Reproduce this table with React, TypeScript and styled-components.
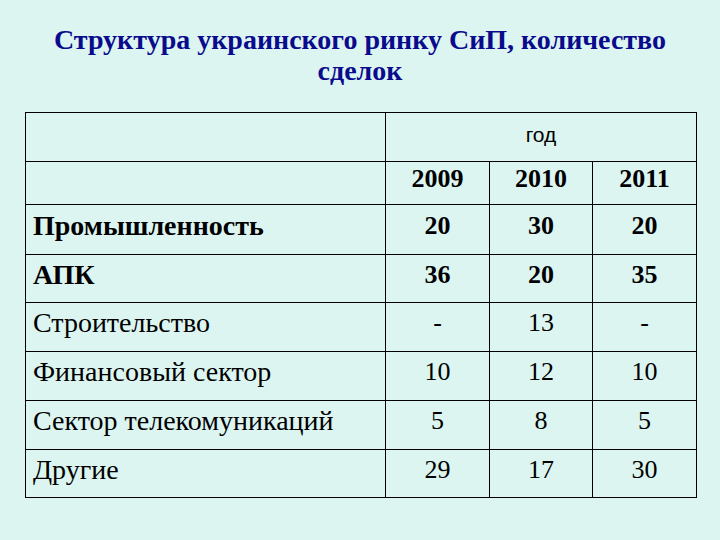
import styled, { createGlobalStyle } from "styled-components";

const GlobalStyle = createGlobalStyle`
  html, body {
    margin: 0;
    padding: 0;
    background: #dcf5f1;
  }
`;

const years = ["2009", "2010", "2011"];

const rows: { label: string; values: string[]; bold?: boolean; height: number }[] = [
  { label: "Промышленность", values: ["20", "30", "20"], bold: true, height: 50 },
  { label: "АПК", values: ["36", "20", "35"], bold: true, height: 48 },
  { label: "Строительство", values: ["-", "13", "-"], height: 49 },
  { label: "Финансовый сектор", values: ["10", "12", "10"], height: 49 },
  { label: "Сектор телекомуникаций", values: ["5", "8", "5"], height: 49 },
  { label: "Другие", values: ["29", "17", "30"], height: 48 },
];

const App = () => {
  return (
    <>
      <GlobalStyle />
      <Slide>
        <Title>
          Структура украинского ринку СиП, количество
          <br />
          сделок
        </Title>
        <Table>
          <colgroup>
            <col style={{ width: 360 }} />
            <col style={{ width: 104 }} />
            <col style={{ width: 103 }} />
            <col style={{ width: 104 }} />
          </colgroup>
          <tbody>
            <Row $height={49}>
              <LabelCell />
              <YearGroupCell colSpan={3}>год</YearGroupCell>
            </Row>
            <Row $height={43}>
              <LabelCell />
              {years.map((y) => (
                <ValueCell key={y} $bold>
                  {y}
                </ValueCell>
              ))}
            </Row>
            {rows.map((r) => (
              <Row key={r.label} $height={r.height}>
                <LabelCell $bold={r.bold}>{r.label}</LabelCell>
                {r.values.map((v, i) => (
                  <ValueCell key={i} $bold={r.bold}>
                    {v}
                  </ValueCell>
                ))}
              </Row>
            ))}
          </tbody>
        </Table>
      </Slide>
    </>
  );
};

const Slide = styled.div`
  width: 720px;
  height: 540px;
  background: #dcf5f1;
  display: flex;
  flex-direction: column;
  align-items: flex-start;
  padding: 24px 0 0 25px;
  box-sizing: border-box;
`;

const Title = styled.h1`
  margin: 0 0 26px -25px;
  width: 720px;
  text-align: center;
  font-family: "Liberation Serif", serif;
  font-weight: bold;
  font-size: 28px;
  line-height: 31px;
  color: #0a0a8c;
`;

const Table = styled.table`
  border-collapse: collapse;
  table-layout: fixed;
  width: 671px;
  font-family: "Liberation Serif", serif;
  color: #000;
`;

const Row = styled.tr<{ $height: number }>`
  height: ${(p) => p.$height}px;
`;

const Cell = styled.td`
  border: 1px solid #000;
  padding: 0 0 8px;
  vertical-align: middle;
  font-family: "Liberation Serif", serif;
`;

const LabelCell = styled(Cell)<{ $bold?: boolean }>`
  padding-left: 7px;
  text-align: left;
  font-size: 28px;
  font-weight: ${(p) => (p.$bold ? "bold" : "normal")};
`;

const ValueCell = styled(Cell)<{ $bold?: boolean }>`
  text-align: center;
  font-size: 26px;
  font-weight: ${(p) => (p.$bold ? "bold" : "normal")};
`;

const YearGroupCell = styled(Cell)`
  text-align: center;
  font-family: "Liberation Sans", Arial, sans-serif;
  font-size: 21px;
  padding-bottom: 4px;
`;

export default App;
